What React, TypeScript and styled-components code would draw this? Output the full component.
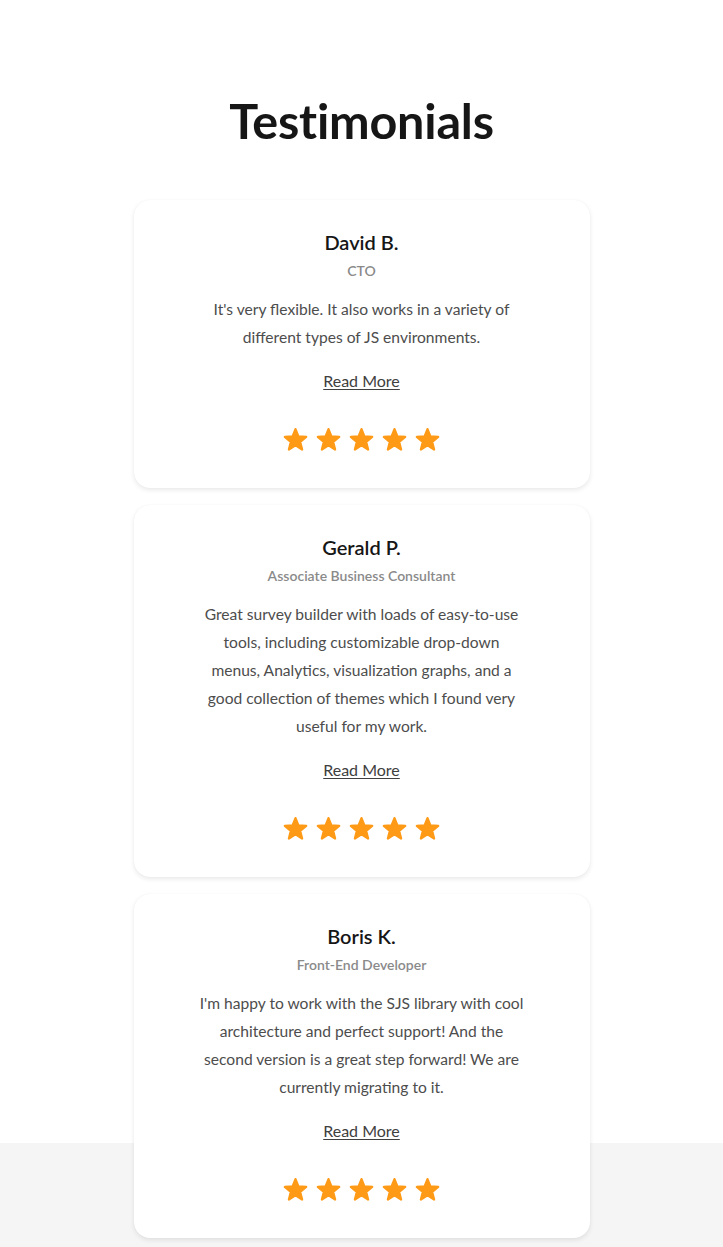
import React from "react";
import styled, { createGlobalStyle } from "styled-components";

const Global = createGlobalStyle`
  html, body { margin: 0; padding: 0; }
  body { font-family: Lato, "Open Sans", sans-serif; background: #f5f5f5; }
`;

const Page = styled.div`
  background: linear-gradient(to bottom, #ffffff 1143px, #f5f5f5 1143px);
  min-height: 1247px;
  padding: 91px 0 9px;
  box-sizing: border-box;
  display: flex;
  flex-direction: column;
  align-items: center;
`;

const Title = styled.h1`
  margin: 0 0 51px;
  font-size: 48.5px;
  line-height: 58px;
  font-weight: 700;
  color: #161616;
  letter-spacing: -0.2px;
`;

const List = styled.div`
  display: flex;
  flex-direction: column;
  gap: 17px;
  width: 456px;
`;

const Card = styled.article`
  background: #fff;
  border-radius: 16px;
  box-shadow: 0 2px 5px rgba(0, 0, 0, 0.09), 0 0 1px rgba(0, 0, 0, 0.06);
  padding: 30px 60px 35px;
  display: flex;
  flex-direction: column;
  align-items: center;
  text-align: center;
`;

const Name = styled.h3`
  margin: 0;
  font-size: 20px;
  line-height: 24px;
  font-weight: 600;
  color: #161616;
`;

const Role = styled.div`
  margin-top: 9px;
  font-size: 14px;
  line-height: 16px;
  font-weight: 600;
  color: #8a8a8a;
`;

const Quote = styled.p`
  margin: 16px 0 0;
  max-width: 325px;
  font-size: 15.6px;
  line-height: 28px;
  color: #4d4d4d;
`;

const ReadMore = styled.a`
  margin-top: 20px;
  font-size: 16px;
  line-height: 20px;
  color: #404040;
  text-decoration: underline;
  text-underline-offset: 2px;
  cursor: pointer;
`;

const Stars = styled.div`
  margin-top: 35px;
  display: flex;
  gap: 6px;
`;

const StarSvg = styled.svg`
  width: 27px;
  height: 27px;
  display: block;
`;

const Star = () => (
  <StarSvg viewBox="0 0 24 24">
    <path
      d="M12 2.8L14.59 9.24L21.51 9.71L16.18 14.16L17.88 20.89L12 17.2L6.12 20.89L7.82 14.16L2.49 9.71L9.41 9.24Z"
      fill="#ff9a17"
      stroke="#ff9a17"
      strokeWidth="2"
      strokeLinejoin="round"
    />
  </StarSvg>
);

const data = [
  {
    name: "David B.",
    role: "CTO",
    text: "It's very flexible. It also works in a variety of different types of JS environments.",
  },
  {
    name: "Gerald P.",
    role: "Associate Business Consultant",
    text: "Great survey builder with loads of easy-to-use tools, including customizable drop-down menus, Analytics, visualization graphs, and a good collection of themes which I found very useful for my work.",
  },
  {
    name: "Boris K.",
    role: "Front-End Developer",
    text: "I'm happy to work with the SJS library with cool architecture and perfect support! And the second version is a great step forward! We are currently migrating to it.",
  },
];

export default function App() {
  return (
    <>
      <Global />
      <Page>
        <Title>Testimonials</Title>
        <List>
          {data.map((d) => (
            <Card key={d.name}>
              <Name>{d.name}</Name>
              <Role>{d.role}</Role>
              <Quote>{d.text}</Quote>
              <ReadMore>Read More</ReadMore>
              <Stars>
                {[0, 1, 2, 3, 4].map((i) => (
                  <Star key={i} />
                ))}
              </Stars>
            </Card>
          ))}
        </List>
      </Page>
    </>
  );
}
